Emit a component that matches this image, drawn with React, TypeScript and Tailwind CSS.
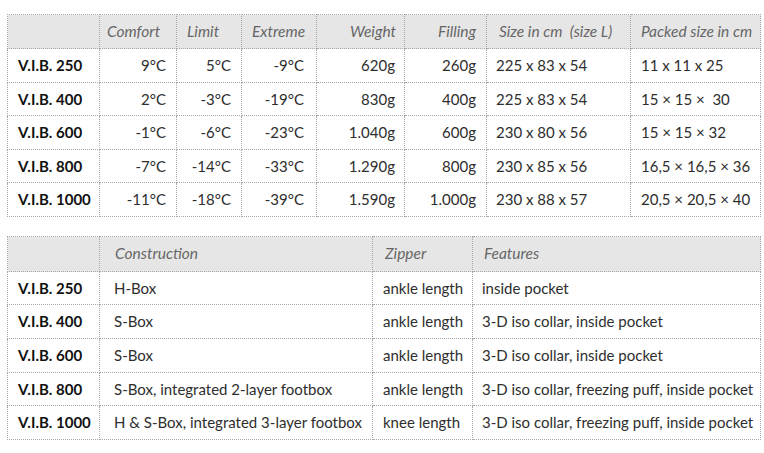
import React from "react";

const t1 = [
  ["V.I.B. 250", "9°C", "5°C", "-9°C", "620g", "260g", "225 x 83 x 54", "11 x 11 x 25"],
  ["V.I.B. 400", "2°C", "-3°C", "-19°C", "830g", "400g", "225 x 83 x 54", "15 × 15 ×  30"],
  ["V.I.B. 600", "-1°C", "-6°C", "-23°C", "1.040g", "600g", "230 x 80 x 56", "15 × 15 × 32"],
  ["V.I.B. 800", "-7°C", "-14°C", "-33°C", "1.290g", "800g", "230 x 85 x 56", "16,5 × 16,5 × 36"],
  ["V.I.B. 1000", "-11°C", "-18°C", "-39°C", "1.590g", "1.000g", "230 x 88 x 57", "20,5 × 20,5 × 40"],
];
const h1 = [34, 33, 34, 33, 34];

const t2 = [
  ["V.I.B. 250", "H-Box", "ankle length", "inside pocket"],
  ["V.I.B. 400", "S-Box", "ankle length", "3-D iso collar, inside pocket"],
  ["V.I.B. 600", "S-Box", "ankle length", "3-D iso collar, inside pocket"],
  ["V.I.B. 800", "S-Box, integrated 2-layer footbox", "ankle length", "3-D iso collar, freezing puff, inside pocket"],
  ["V.I.B. 1000", "H & S-Box, integrated 3-layer footbox", "knee length", "3-D iso collar, freezing puff, inside pocket"],
];
const h2 = [33, 34, 34, 33, 34];

const cell = "border border-dotted border-[#a9a9a9] p-0 align-middle whitespace-nowrap";

export default function App() {
  return (
    <div className="w-[764px] h-[453px] bg-white pl-[7px] pt-[14px] text-[15px] text-[#2e2e2e] font-['Lato',sans-serif] leading-none">
      <table className="border-collapse table-fixed w-[753px]">
        <colgroup>
          <col className="w-[92px]" />
          <col className="w-[77px]" />
          <col className="w-[65px]" />
          <col className="w-[75px]" />
          <col className="w-[88px]" />
          <col className="w-[82px]" />
          <col className="w-[144px]" />
          <col className="w-[130px]" />
        </colgroup>
        <thead>
          <tr className="h-[34px] bg-[#e6e6e6] text-[#666] italic text-[15.5px]">
            <th className={cell}></th>
            <th className={`${cell} text-left font-normal pl-[7px]`}>Comfort</th>
            <th className={`${cell} text-left font-normal pl-[10px]`}>Limit</th>
            <th className={`${cell} text-left font-normal pl-[10px]`}>Extreme</th>
            <th className={`${cell} text-right font-normal pr-[8px]`}>Weight</th>
            <th className={`${cell} text-right font-normal pr-[10px]`}>Filling</th>
            <th className={`${cell} text-left font-normal pl-[12px]`}>Size in cm&nbsp; (size L)</th>
            <th className={`${cell} text-left font-normal pl-[10px]`}>Packed size in cm</th>
          </tr>
        </thead>
        <tbody>
          {t1.map((r, i) => (
            <tr key={i} style={{ height: h1[i] }}>
              <td className={`${cell} pl-[10px] font-bold text-[#111]`}>{r[0]}</td>
              <td className={`${cell} text-right pr-[10px]`}>{r[1]}</td>
              <td className={`${cell} text-right pr-[10px]`}>{r[2]}</td>
              <td className={`${cell} text-right pr-[12px]`}>{r[3]}</td>
              <td className={`${cell} text-right pr-[9px]`}>{r[4]}</td>
              <td className={`${cell} text-right pr-[10px]`}>{r[5]}</td>
              <td className={`${cell} pl-[9px] whitespace-pre`}>{r[6]}</td>
              <td className={`${cell} pl-[10px] whitespace-pre`}>{r[7]}</td>
            </tr>
          ))}
        </tbody>
      </table>
      <table className="border-collapse table-fixed w-[753px] mt-[19px]">
        <colgroup>
          <col className="w-[92px]" />
          <col className="w-[273px]" />
          <col className="w-[100px]" />
          <col className="w-[288px]" />
        </colgroup>
        <thead>
          <tr className="h-[35px] bg-[#e6e6e6] text-[#666] italic text-[15.5px]">
            <th className={cell}></th>
            <th className={`${cell} text-left font-normal pl-[15px]`}>Construction</th>
            <th className={`${cell} text-left font-normal pl-[12px]`}>Zipper</th>
            <th className={`${cell} text-left font-normal pl-[11px]`}>Features</th>
          </tr>
        </thead>
        <tbody>
          {t2.map((r, i) => (
            <tr key={i} style={{ height: h2[i] }}>
              <td className={`${cell} pl-[10px] font-bold text-[#111]`}>{r[0]}</td>
              <td className={`${cell} pl-[14px]`}>{r[1]}</td>
              <td className={`${cell} pl-[10px]`}>{r[2]}</td>
              <td className={`${cell} pl-[9px]`}>{r[3]}</td>
            </tr>
          ))}
        </tbody>
      </table>
    </div>
  );
}
